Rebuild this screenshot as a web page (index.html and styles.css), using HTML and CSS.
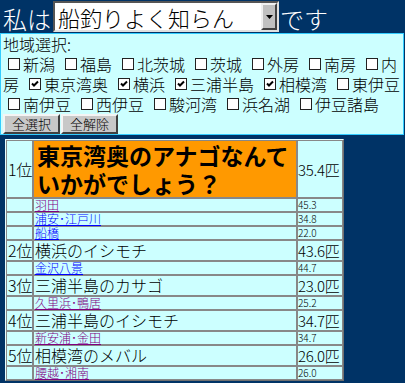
FILE: index.html
```html
<!DOCTYPE html>
<html lang="ja">
<head>
<meta charset="utf-8">
<title>船釣り</title>
<link rel="stylesheet" href="styles.css">
</head>
<body>
<header class="top">
  <span class="lead">私は</span>
  <div class="select">
    <span class="select-text">船釣りよく知らん</span>
    <span class="select-btn"><svg width="7" height="4" viewBox="0 0 7 4"><path d="M0 0H7L3.5 4Z" fill="#000"/></svg></span>
  </div>
  <span class="lead lead-after">です</span>
</header>
<form class="area">
  <div class="area-title">地域選択:</div>
  <div class="cb-row">
    <label class="cb-item"><span class="cb"></span>新潟</label>
    <label class="cb-item"><span class="cb"></span>福島</label>
    <label class="cb-item"><span class="cb"></span>北茨城</label>
    <label class="cb-item"><span class="cb"></span>茨城</label>
    <label class="cb-item"><span class="cb"></span>外房</label>
    <label class="cb-item"><span class="cb"></span>南房</label>
    <label class="cb-item"><span class="cb"></span>内</label>
  </div>
  <div class="cb-row">
    <span class="cb-cont">房</span>
    <label class="cb-item"><span class="cb"><svg width="8" height="8" viewBox="0 0 8 8"><path d="M1 3.5L3 5.5L7 1.5" fill="none" stroke="#000" stroke-width="2"/></svg></span>東京湾奥</label>
    <label class="cb-item"><span class="cb"><svg width="8" height="8" viewBox="0 0 8 8"><path d="M1 3.5L3 5.5L7 1.5" fill="none" stroke="#000" stroke-width="2"/></svg></span>横浜</label>
    <label class="cb-item"><span class="cb"><svg width="8" height="8" viewBox="0 0 8 8"><path d="M1 3.5L3 5.5L7 1.5" fill="none" stroke="#000" stroke-width="2"/></svg></span>三浦半島</label>
    <label class="cb-item"><span class="cb"><svg width="8" height="8" viewBox="0 0 8 8"><path d="M1 3.5L3 5.5L7 1.5" fill="none" stroke="#000" stroke-width="2"/></svg></span>相模湾</label>
    <label class="cb-item"><span class="cb"></span>東伊豆</label>
  </div>
  <div class="cb-row">
    <label class="cb-item"><span class="cb"></span>南伊豆</label>
    <label class="cb-item"><span class="cb"></span>西伊豆</label>
    <label class="cb-item"><span class="cb"></span>駿河湾</label>
    <label class="cb-item"><span class="cb"></span>浜名湖</label>
    <label class="cb-item"><span class="cb"></span>伊豆諸島</label>
  </div>
  <div class="btns">
    <button type="button" class="btn">全選択</button>
    <button type="button" class="btn">全解除</button>
  </div>
</form>
<table class="rank">
  <tr class="main first">
    <td class="pos">1位</td>
    <td class="name hl">東京湾奥のアナゴなんていかがでしょう？</td>
    <td class="cnt">35.4匹</td>
  </tr>
  <tr class="sub"><td class="pos"></td><td class="name"><a class="visited" href="#">羽田</a></td><td class="num">45.3</td></tr>
  <tr class="sub"><td class="pos"></td><td class="name"><a href="#">浦安･江戸川</a></td><td class="num">34.8</td></tr>
  <tr class="sub"><td class="pos"></td><td class="name"><a href="#">船橋</a></td><td class="num">22.0</td></tr>
  <tr class="main">
    <td class="pos">2位</td>
    <td class="name">横浜のイシモチ</td>
    <td class="cnt">43.6匹</td>
  </tr>
  <tr class="sub"><td class="pos"></td><td class="name"><a href="#">金沢八景</a></td><td class="num">44.7</td></tr>
  <tr class="main">
    <td class="pos">3位</td>
    <td class="name">三浦半島のカサゴ</td>
    <td class="cnt">23.0匹</td>
  </tr>
  <tr class="sub"><td class="pos"></td><td class="name"><a class="visited" href="#">久里浜･鴨居</a></td><td class="num">25.2</td></tr>
  <tr class="main">
    <td class="pos">4位</td>
    <td class="name">三浦半島のイシモチ</td>
    <td class="cnt">34.7匹</td>
  </tr>
  <tr class="sub"><td class="pos"></td><td class="name"><a class="visited" href="#">新安浦･金田</a></td><td class="num">34.7</td></tr>
  <tr class="main">
    <td class="pos">5位</td>
    <td class="name">相模湾のメバル</td>
    <td class="cnt">26.0匹</td>
  </tr>
  <tr class="sub"><td class="pos"></td><td class="name"><a class="visited" href="#">腰越･湘南</a></td><td class="num">26.0</td></tr>
</table>
</body>
</html>
```
FILE: styles.css
```css
html, body {
  margin: 0;
  padding: 0;
}
body {
  background: #003366;
  font-family: "Noto Sans CJK JP", "Noto Sans", sans-serif;
  font-weight: 300;
  color: #000;
  overflow: hidden;
}
.top {
  display: flex;
  align-items: flex-start;
  height: 33px;
  padding-left: 3px;
}
.lead {
  color: #fff;
  font-size: 24px;
  line-height: 24px;
  margin-top: 7px;
}
.lead-after {
  margin-left: 1px;
}
.select {
  box-sizing: border-box;
  margin-top: 1px;
  margin-left: 2px;
  width: 226px;
  height: 31px;
  background: #fff;
  border: 2px solid;
  border-color: #555 #e0e0e0 #e0e0e0 #555;
  display: flex;
  align-items: center;
  justify-content: space-between;
  padding-left: 3px;
}
.select-text {
  font-size: 22px;
  line-height: 24px;
}
.select-btn {
  box-sizing: border-box;
  width: 16px;
  height: 27px;
  background: #c0c0c0;
  border: 2px solid;
  border-color: #f0f0f0 #404040 #404040 #f0f0f0;
  display: flex;
  align-items: center;
  justify-content: center;
}
.area {
  margin: 0 1px 0 0;
  background: #ccffff;
  border: 1px solid #33ccff;
  padding: 0 0 0 2px;
  font-size: 16px;
}
.area-title {
  line-height: 20px;
  height: 20px;
}
.cb-row {
  display: flex;
  gap: 5px;
  height: 20px;
  line-height: 20px;
  white-space: nowrap;
}
.cb-item {
  display: flex;
  align-items: center;
}
.cb {
  box-sizing: border-box;
  width: 12px;
  height: 12px;
  margin: 0 3px 0 5px;
  background: #fff;
  border: 1px solid #222;
  display: flex;
  align-items: center;
  justify-content: center;
}
.btns {
  display: flex;
  gap: 1px;
  height: 20px;
}
.btn {
  box-sizing: border-box;
  width: 57px;
  height: 20px;
  margin: 0;
  padding: 0;
  font-family: "Noto Sans CJK JP", sans-serif;
  font-weight: 300;
  font-size: 13px;
  line-height: 16px;
  color: #000;
  background: #c8c8c8;
  border: 2px solid;
  border-color: #f4f4f4 #404040 #404040 #f4f4f4;
}
.rank {
  margin: 4px 0 0 5px;
  width: 339px;
  table-layout: fixed;
  border-collapse: separate;
  border-spacing: 0;
  border: 1px solid;
  border-color: #e8ffff #707070 #707070 #e8ffff;
}
.rank td {
  box-sizing: border-box;
  background: #ccffff;
  border: 1px solid #888;
  padding: 0;
  white-space: nowrap;
  overflow: visible;
}
.rank td.pos {
  width: 27px;
  padding-left: 1px;
}
.rank td.name {
  width: 264px;
  padding-left: 1px;
}
.rank .main td {
  font-size: 16px;
  line-height: 19px;
}
.rank .main td.cnt {
  font-size: 15px;
  letter-spacing: -0.3px;
}
.rank td.hl {
  background: #ff9900;
  font-size: 23px;
  font-weight: bold;
  line-height: 28px;
  white-space: normal;
  padding-left: 3px;
}
.rank .sub td {
  line-height: 12px;
  font-size: 12px;
}
.rank .sub td.num {
  font-size: 10px;
}
.rank a {
  color: #0000ff;
  text-decoration: underline;
}
.rank a.visited {
  color: #800080;
}
```
